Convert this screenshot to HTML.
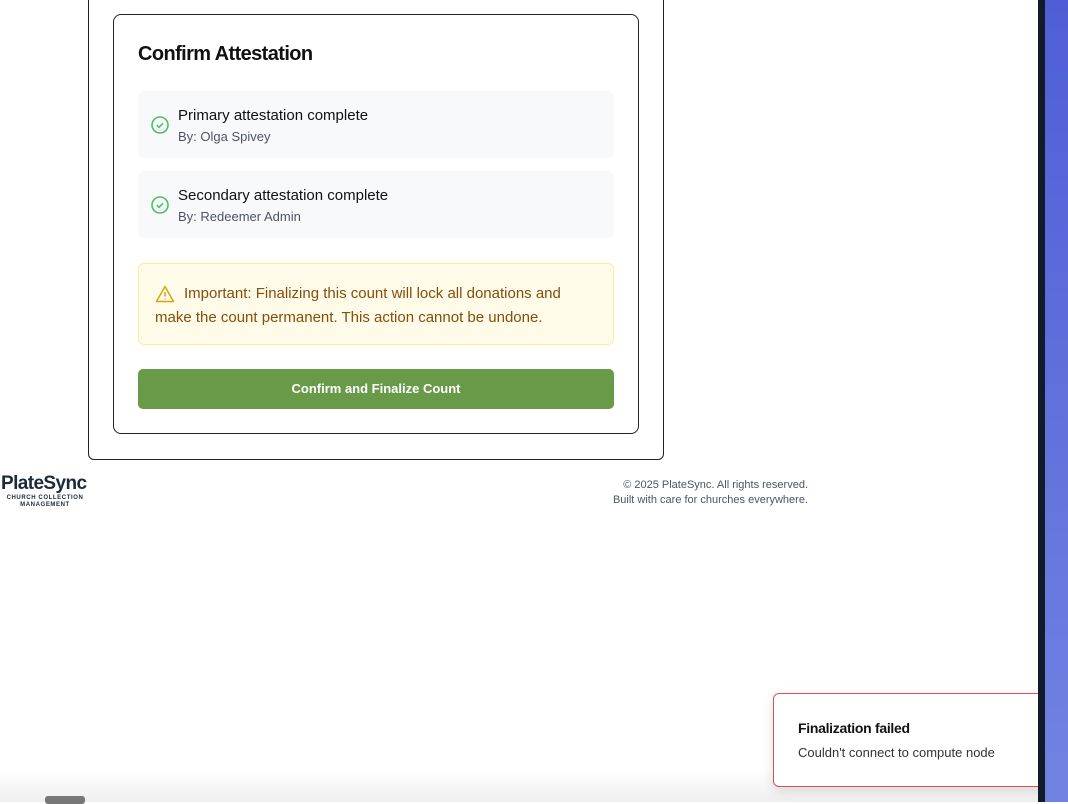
<!DOCTYPE html><html><head><style>
body{margin:0;width:1068px;height:802px;position:relative;overflow:hidden;background:#fff;font-family:"Liberation Sans",sans-serif;color:#111}
.abs{position:absolute}
.item{position:absolute;left:138px;width:476px;height:67px;background:#f8f9fb;border-radius:6px}
.item .t{position:absolute;left:40px;top:16px;font-size:15px;color:#111}
.item .s{position:absolute;left:40px;top:38px;font-size:13px;color:#4b5563}
.item svg{position:absolute;left:12px;top:24px}
</style></head><body>
<div class="abs" style="left:88px;top:-10px;width:574px;height:468px;border:1px solid #222;border-radius:6px"></div>
<div class="abs" style="left:113px;top:14px;width:524px;height:418px;border:1px solid #222;border-radius:8px"></div>
<div class="abs" style="left:138px;top:43px;font-size:20px;font-weight:bold;letter-spacing:-0.6px">Confirm Attestation</div>
<div class="item" style="top:91px"><svg width="20" height="20" viewBox="0 0 20 20"><circle cx="10" cy="10" r="8" fill="none" stroke="#4cbf62" stroke-width="1.6"/><path d="M6.8 10.2l2.2 2.1 4-4" fill="none" stroke="#4cbf62" stroke-width="1.6"/></svg><div class="t">Primary attestation complete</div><div class="s">By: Olga Spivey</div></div>
<div class="item" style="top:171px"><svg width="20" height="20" viewBox="0 0 20 20"><circle cx="10" cy="10" r="8" fill="none" stroke="#4cbf62" stroke-width="1.6"/><path d="M6.8 10.2l2.2 2.1 4-4" fill="none" stroke="#4cbf62" stroke-width="1.6"/></svg><div class="t">Secondary attestation complete</div><div class="s">By: Redeemer Admin</div></div>
<div class="abs" style="left:138px;top:263px;width:474px;height:80px;background:#fefce8;border:1px solid #fbef9a;border-radius:6px">
<svg class="abs" style="left:16px;top:20px" width="20" height="20" viewBox="0 0 20 20"><path d="M10 2.5L18.5 17.5H1.5Z" fill="none" stroke="#d4a514" stroke-width="1.5" stroke-linejoin="round"/><path d="M10 8v4.5M10 14.5v1" stroke="#d4a514" stroke-width="1.5"/></svg>
<div class="abs" style="left:16px;top:18px;width:440px;font-size:15px;line-height:24px;color:#854d0e;text-indent:29px">Important: Finalizing this count will lock all donations and make the count permanent. This action cannot be undone.</div></div>
<div class="abs" style="left:138px;top:369px;width:476px;height:40px;background:#689a48;border-radius:5px;color:#fff;font-size:13px;font-weight:bold;text-align:center;line-height:40px">Confirm and Finalize Count</div>
<div class="abs" style="left:1px;top:473px;font-size:19px;font-weight:bold;color:#1e293b;letter-spacing:-0.6px">PlateSync</div>
<div class="abs" style="left:0;top:495px;width:90px;text-align:center;font-size:6px;font-weight:bold;line-height:7px;color:#1e293b;letter-spacing:0.6px">CHURCH COLLECTION<br>MANAGEMENT</div>
<div class="abs" style="left:560px;top:478px;width:248px;text-align:right;font-size:11px;line-height:15px;color:#4b5563">© 2025 PlateSync. All rights reserved.<br>Built with care for churches everywhere.</div>
<div class="abs" style="left:0;top:770px;width:1038px;height:32px;background:linear-gradient(#fff,#efefef)"></div>
<div class="abs" style="left:45px;top:796px;width:40px;height:8px;background:#777;border-radius:3px"></div>
<div class="abs" style="left:773px;top:693px;width:280px;height:92px;border:1px solid #d9534f;border-radius:6px;background:#fff;box-shadow:0 4px 12px rgba(0,0,0,.12)">
<div class="abs" style="left:24px;top:26px;font-size:14px;font-weight:bold;color:#111;letter-spacing:-0.3px">Finalization failed</div>
<div class="abs" style="left:24px;top:51px;font-size:13px;color:#333">Couldn't connect to compute node</div></div>
<div class="abs" style="left:1038px;top:0;width:7px;height:802px;background:#141a2a"></div>
<div class="abs" style="left:1045px;top:0;width:23px;height:802px;background:linear-gradient(#4f5ed6,#7183e2)"></div>
</body></html>
